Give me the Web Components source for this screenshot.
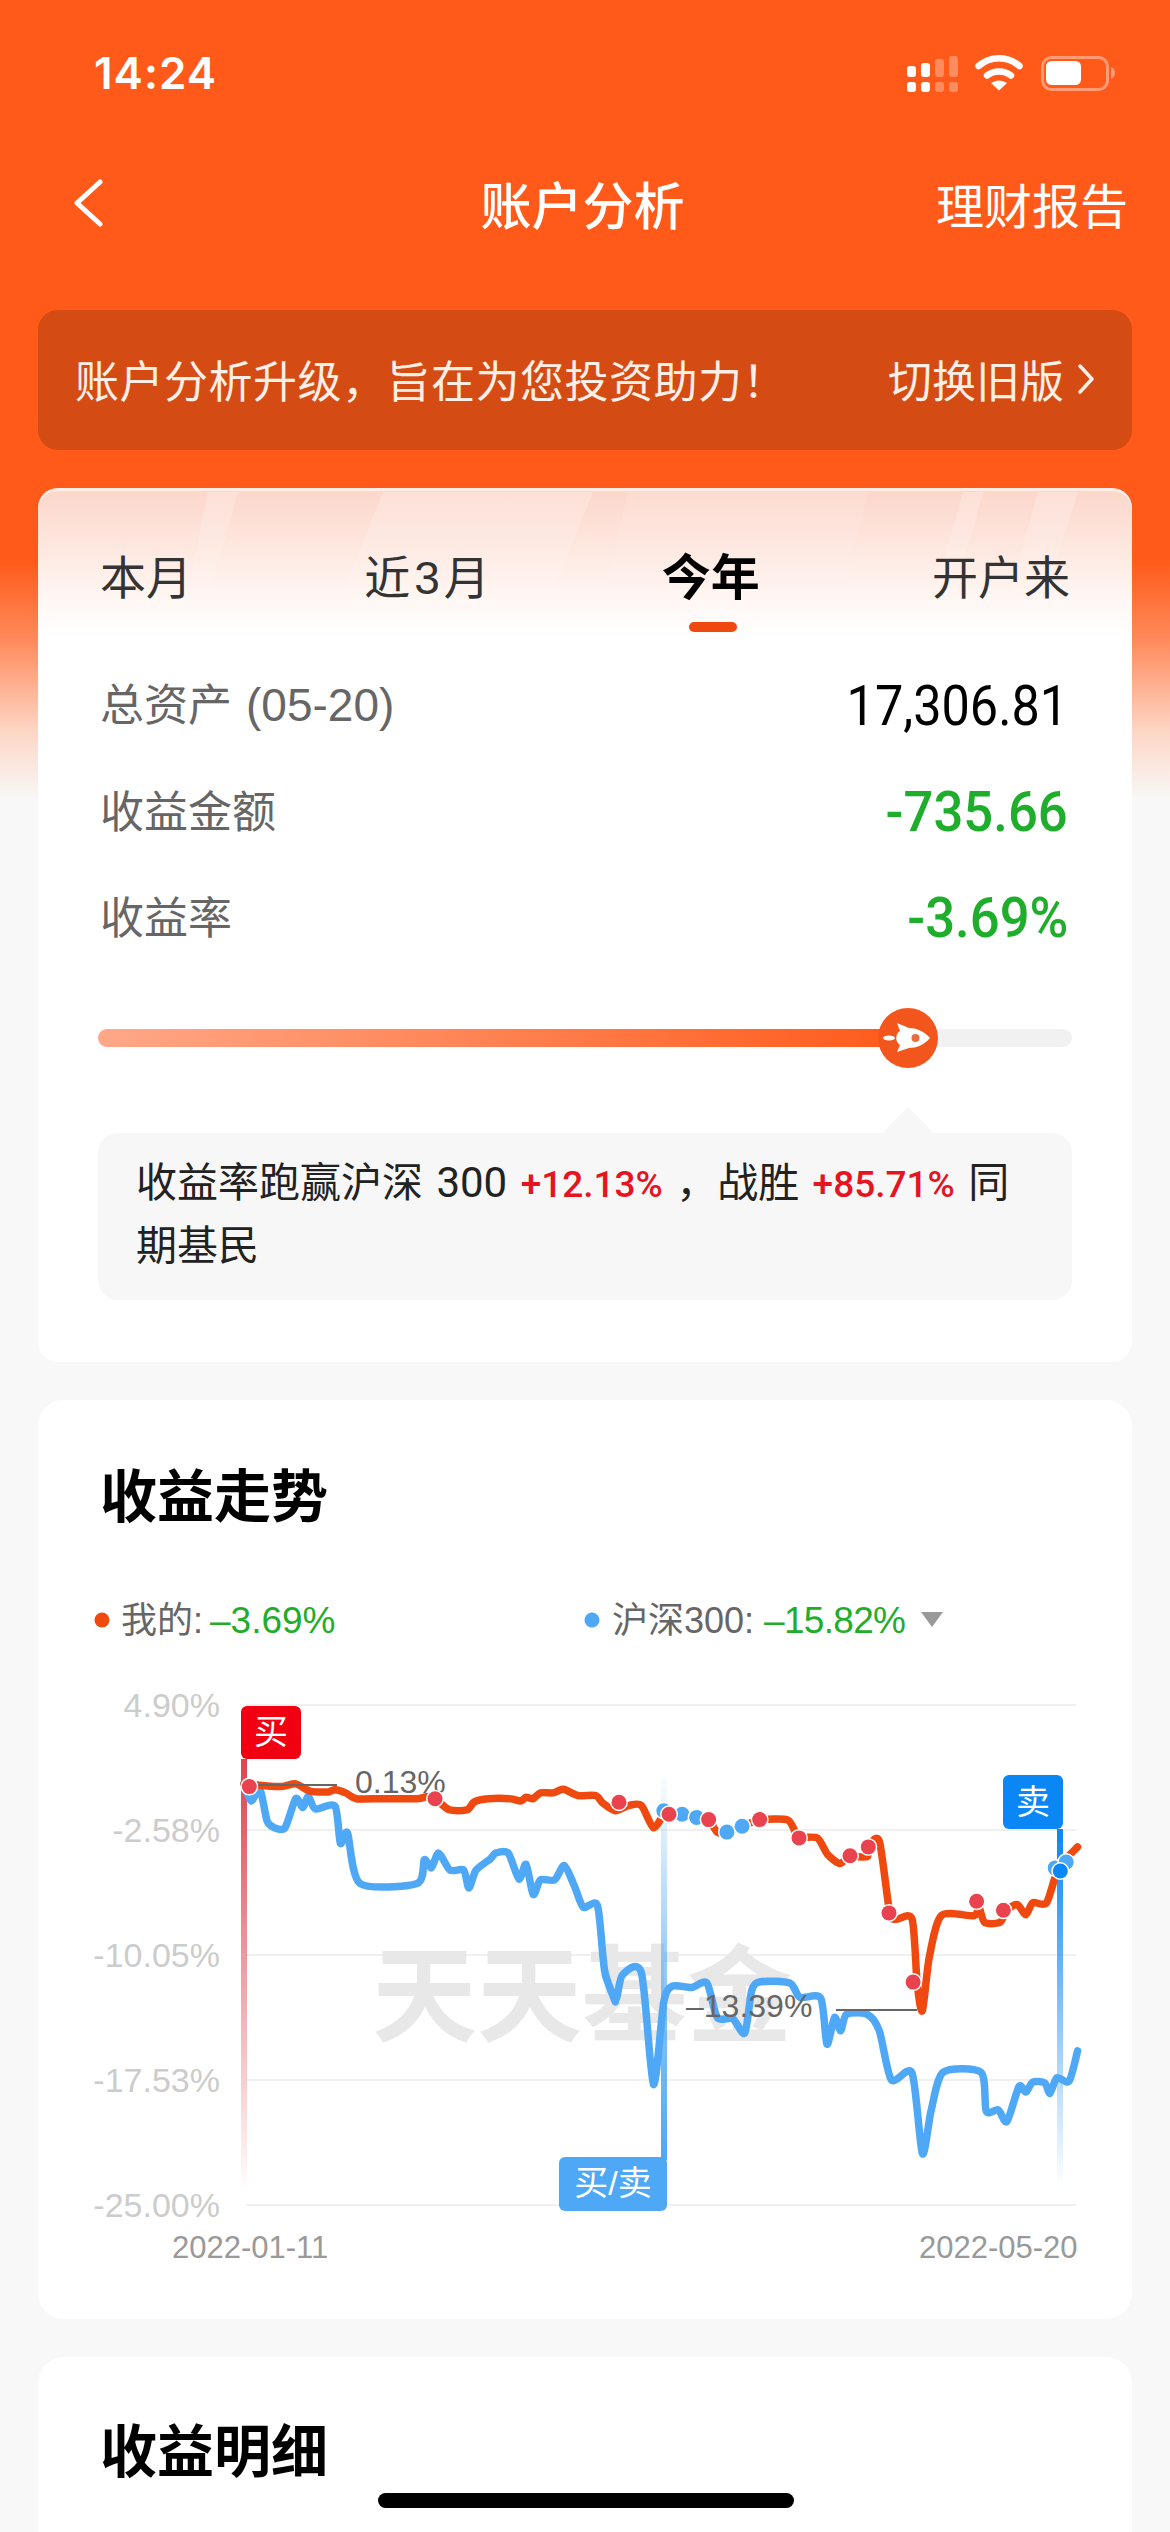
<!DOCTYPE html>
<html lang="zh">
<head>
<meta charset="utf-8">
<title>账户分析</title>
<style>
  html, body { margin: 0; padding: 0; }
  body {
    width: 1170px;
    height: 2532px;
    overflow: hidden;
    font-family: "Liberation Sans", "Noto Sans CJK SC", sans-serif;
  }
</style>
</head>
<body>
<account-page>
  <status-bar time="14:24"></status-bar>
  <nav-bar title="账户分析" action="理财报告"></nav-bar>
  <notice-banner action="切换旧版">账户分析升级，旨在为您投资助力！</notice-banner>
  <summary-card>
    <period-tabs></period-tabs>
    <stat-row label="总资产" extra="(05-20)" value="17,306.81"></stat-row>
    <stat-row label="收益金额" value="-735.66" tone="down"></stat-row>
    <stat-row label="收益率" value="-3.69%" tone="down"></stat-row>
    <rank-slider></rank-slider>
    <compare-note>收益率跑赢沪深 <i>300</i> <b>+12.13%</b> ，战胜 <b>+85.71%</b> 同<br>期基民</compare-note>
  </summary-card>
  <section-card title="收益走势" class="trend"><trend-chart></trend-chart></section-card>
  <section-card title="收益明细" class="detail"></section-card>
  <home-indicator></home-indicator>
</account-page>

<script>
const CJK = '"Noto Sans CJK SC", "Liberation Sans", sans-serif';

class AccountPage extends HTMLElement {
  constructor() {
    super();
    this.attachShadow({ mode: "open" });
    this.shadowRoot.innerHTML = `
    <style>
    :host {
      display: block;
      position: relative;
      width: 1170px;
      height: 2532px;
      overflow: hidden;
      background: linear-gradient(#ff5a19 0, #ff5a19 560px, #ff8a5c 640px, #fdd5c4 730px, #f8f8f8 800px, #f8f8f8 100%);
    }
    </style>
    <slot></slot>
    `;
  }
}

class StatusBar extends HTMLElement {
  constructor() {
    super();
    this.attachShadow({ mode: "open" });
    this.shadowRoot.innerHTML = `
    <style>
    :host { display: flex; height: 146px; align-items: center; justify-content: space-between; padding: 0 55px 0 94px; color: #fff; }
    .time { font: 600 44px Inter, "Liberation Sans", sans-serif; letter-spacing: 1px; }
    svg { display: block; }
    </style>
    <span class="time">${this.getAttribute("time") || ""}</span>
    <svg width="210" height="40" viewBox="905 54 210 40" fill="#fff">
      <rect x="907" y="83" width="9" height="10" rx="3"/><rect x="921" y="83" width="9" height="10" rx="3"/>
      <rect x="907" y="67" width="9" height="11" rx="3"/><rect x="921" y="64" width="9" height="14" rx="3"/>
      <g opacity=".3"><rect x="935" y="83" width="9" height="10" rx="3"/><rect x="949" y="83" width="9" height="10" rx="3"/>
      <rect x="935" y="60" width="9" height="18" rx="3"/><rect x="949" y="57" width="9" height="21" rx="3"/></g>
      <path d="M978.5 67 C990 56.5 1008 56.5 1019.5 67" fill="none" stroke="#fff" stroke-width="6.5" stroke-linecap="round"/>
      <path d="M987 76.500 C993.500 71 1004.500 71 1011 76.500" fill="none" stroke="#fff" stroke-width="6.500" stroke-linecap="round"/>
      <path d="M991 84 C996 80.500 1002 80.500 1007 84 L999 91.500Z"/>
      <rect x="1042.500" y="58.500" width="65" height="32" rx="9" fill="none" stroke="#fff" stroke-opacity=".4" stroke-width="3"/>
      <rect x="1046" y="62" width="35" height="24" rx="5.500"/>
      <path d="M1111 68 C1114 69.500 1115 72 1115 74 C1115 76 1114 78.500 1111 80Z" opacity=".4"/>
    </svg>
    `;
  }
}

class NavBar extends HTMLElement {
  constructor() {
    super();
    this.attachShadow({ mode: "open" });
    this.shadowRoot.innerHTML = `
    <style>
    :host { display: grid; grid-template-columns: 1fr auto 1fr; align-items: center; height: 114px; padding: 0 42px 0 37px; color: #fff; font-family: ${CJK}; }
    svg { display: block; margin-left: 37px; }
    .title { font-size: 51px; font-weight: 500; }
    .action { justify-self: end; font-size: 48px; }
    </style>
    <svg width="30" height="48" viewBox="0 0 30 48" fill="none" stroke="#fff" stroke-width="5" stroke-linecap="round" stroke-linejoin="round">
      <path d="M26 3 L3 24 L26 45"/>
    </svg>
    <span class="title">${this.getAttribute("title")}</span>
    <span class="action">${this.getAttribute("action")}</span>
    `;
  }
}

class NoticeBanner extends HTMLElement {
  constructor() {
    super();
    this.attachShadow({ mode: "open" });
    this.shadowRoot.innerHTML = `
    <style>
    :host {
      display: flex; align-items: center; justify-content: space-between;
      box-sizing: border-box; height: 140px; margin: 50px 38px 0; padding: 0 37px;
      background: #d44c14; border-radius: 20px; color: #fdeee6; font-size: 44px; line-height: 60px; font-family: ${CJK};
    }
    .main { letter-spacing: .5px; margin-top: -3px; }
    .action { display: flex; align-items: center; gap: 13px; margin-top: -3px; }
    svg { display: block; }
    </style>
    <span class="main"><slot></slot></span>
    <span class="action">${this.getAttribute("action")}
      <svg width="18" height="32" viewBox="0 0 18 32" fill="none" stroke="#fdeee6" stroke-width="3.500" stroke-linecap="round" stroke-linejoin="round"><path d="M3 3 L15 16 L3 29"/></svg>
    </span>
    `;
  }
}

class SummaryCard extends HTMLElement {
  constructor() {
    super();
    this.attachShadow({ mode: "open" });
    this.shadowRoot.innerHTML = `
    <style>
    :host {
      display: block; position: relative; overflow: hidden; box-sizing: border-box;
      height: 874px; margin: 38px 38px 0; padding: 0 62px; border-radius: 20px;
      background: linear-gradient(#fcd6c9 0, #fde3da 45px, #feefe9 85px, #fff8f5 115px, #ffffff 150px);
      box-shadow: inset 0 3px 0 rgba(255, 255, 255, .55);
    }
    .streaks { position: absolute; left: 0; top: 0; }
    .body { position: relative; }
    </style>
    <svg class="streaks" width="1094" height="140" viewBox="0 0 1094 140">
      <defs><linearGradient id="fade" x1="0" y1="0" x2="0" y2="1"><stop offset="0" stop-color="#fff" stop-opacity=".24"/><stop offset="1" stop-color="#fff" stop-opacity="0"/></linearGradient></defs>
      <path d="M170 4 L200 4 L165 130 L145 130Z" fill="url(#fade)"/>
      <path d="M345 4 L555 4 L505 130 L295 130Z" fill="url(#fade)"/>
      <path d="M590 4 L830 4 L800 130 L560 130Z" fill="url(#fade)" opacity=".5"/>
      <path d="M925 4 L945 4 L910 130 L890 130Z" fill="url(#fade)"/>
      <path d="M1000 4 L1040 4 L1000 130 L965 130Z" fill="url(#fade)"/>
    </svg>
    <div class="body"><slot></slot></div>
    `;
  }
}

class PeriodTabs extends HTMLElement {
  constructor() {
    super();
    this.attachShadow({ mode: "open" });
    this.shadowRoot.innerHTML = `
    <style>
    :host { display: flex; justify-content: space-between; align-items: flex-start; padding-top: 55px; height: 107px; color: #333; font-size: 46px; font-family: ${CJK}; line-height: 62px; }
    .on { position: relative; color: #000; font-weight: 700; font-size: 49px; }
    .on::after { content: ""; position: absolute; left: 27px; top: 79px; width: 48px; height: 10px; border-radius: 5px; background: #f0490f; }
    .three { font-family: "Liberation Sans", ${CJK}; padding: 0 4px; }
    </style>
    <span>本月</span>
    <span>近<span class="three">3</span>月</span>
    <span class="on">今年</span>
    <span>开户来</span>
    `;
  }
}

class StatRow extends HTMLElement {
  constructor() {
    super();
    this.attachShadow({ mode: "open" });
    const extra = this.getAttribute("extra");
    this.shadowRoot.innerHTML = `
    <style>
    :host { display: flex; justify-content: space-between; align-items: center; height: 106px; color: #666; font-size: 44px; line-height: 60px; font-family: ${CJK}; }
    .extra { font-family: "Liberation Sans", sans-serif; font-size: 46px; margin-left: 14px; }
    .value { display: inline-block; transform: translateY(3px) scaleX(.9); transform-origin: right center; color: #000; font: 56px/60px Roboto, "Liberation Sans", sans-serif; margin-right: 2px; }
    :host([tone="down"]) .value { color: #1fad2c; font-weight: 500; transform: translateY(3px) scaleX(.94); }
    </style>
    <span>${this.getAttribute("label")}${extra ? `<span class="extra">${extra}</span>` : ""}</span>
    <span class="value">${this.getAttribute("value")}</span>
    `;
  }
}

class RankSlider extends HTMLElement {
  constructor() {
    super();
    this.attachShadow({ mode: "open" });
    this.shadowRoot.innerHTML = `
    <style>
    :host { display: block; position: relative; height: 18px; margin: 61px -2px 0; border-radius: 9px; background: #f1f1f1; }
    .fill { width: 810px; height: 100%; border-radius: 9px 0 0 9px; background: linear-gradient(90deg, #ffa888, #ff5a19); }
    svg { position: absolute; left: 780px; top: -21px; }
    </style>
    <div class="fill"></div>
    <svg width="60" height="60" viewBox="-30 -30 60 60">
      <circle r="30" fill="#f2561d"/>
      <path d="M22 0 C16 -7 8 -10 1 -10 L-11 -15 L-8 -7 C-13 -4 -13 4 -8 7 L-11 14 L1 10 C8 10 16 7 22 0Z" fill="#fff"/>
      <circle cx="7.500" r="4" fill="#e96a3c"/>
      <ellipse cx="-19" rx="6" ry="2.500" fill="#fff"/>
    </svg>
    `;
  }
}

class CompareNote extends HTMLElement {
  constructor() {
    super();
    this.attachShadow({ mode: "open" });
    this.shadowRoot.innerHTML = `
    <style>
    :host { display: block; position: relative; box-sizing: border-box; height: 167px; margin: 86px -2px 0; padding: 19px 38px; border-radius: 20px; background: #f7f7f7; color: #222; font: 41px/63px "Liberation Sans", "Noto Sans CJK SC", sans-serif; }
    :host::before { content: ""; position: absolute; left: 784px; top: -26px; border: 26px solid transparent; border-top: 0; border-bottom-color: #f7f7f7; }
    ::slotted(b) { color: #e5141e; font: 500 37px Roboto, sans-serif; margin: 0 2px; }
    ::slotted(i) { font: 42px Roboto, sans-serif; margin-left: 2px; }
    </style>
    <slot></slot>
    `;
  }
}

class SectionCard extends HTMLElement {
  constructor() {
    super();
    this.attachShadow({ mode: "open" });
    this.shadowRoot.innerHTML = `
    <style>
    :host { display: block; box-sizing: border-box; margin: 38px 38px 0; border-radius: 26px; background: #fff; }
    :host(.trend) { height: 919px; }
    :host(.detail) { height: 300px; }
    h2 { margin: 0; padding: 52px 0 0 62px; height: 88px; font: 700 57px/80px ${CJK}; color: #000; }
    :host(.detail) h2 { padding-top: 50px; }
    </style>
    <h2>${this.getAttribute("title")}</h2>
    <slot></slot>
    `;
  }
}

// traced from the reference: crops were 2.8x/2.24x (left part) and 2.9x/2.24x (right part)
const L = (p) => [60 + p[0] / 2.8, 1600 + p[1] / 2.24];
const R = (p) => [600 + p[0] / 2.9, 1600 + p[1] / 2.24];

function smooth(pts) {
  let d = "M" + pts[0][0].toFixed(1) + " " + pts[0][1].toFixed(1);
  for (let i = 0; i < pts.length - 1; i++) {
    const p0 = pts[i - 1] || pts[i], p1 = pts[i], p2 = pts[i + 1], p3 = pts[i + 2] || p2;
    const c1 = [p1[0] + (p2[0] - p0[0]) / 8, p1[1] + (p2[1] - p0[1]) / 8];
    const c2 = [p2[0] - (p3[0] - p1[0]) / 8, p2[1] - (p3[1] - p1[1]) / 8];
    d += " C" + [c1, c2, p2].map((p) => p[0].toFixed(1) + " " + p[1].toFixed(1)).join(" ");
  }
  return d;
}

const MINE = [
  ...[[515,412],[560,415],[620,418],[660,412],[700,428],[750,430],[770,425],[800,432],[830,445],[900,445],[1000,445],[1030,440],[1050,445],[1090,470],[1140,470],[1160,452],[1200,445],[1260,445],[1290,450],[1305,442],[1325,445],[1345,432],[1380,432],[1410,424],[1450,438],[1500,438],[1520,455],[1555,472]].map(L),
  ...[[85,460],[120,460],[155,510],[185,480],[200,480],[240,480],[280,487],[315,492],[340,520],[368,520],[410,507],[465,493],[545,493],[575,530],[630,533],[660,570],[695,590],[725,575],[775,575],[778,553],[810,540],[840,700],[860,715],[905,715],[920,860],[935,920],[955,800],[990,707],[1085,707],[1098,685],[1115,722],[1160,722],[1180,695],[1210,682],[1235,705],[1255,678],[1295,678],[1330,600],[1385,553]].map(R)
];
const INDEX = [
  ...[[515,412],[535,450],[560,425],[580,495],[600,510],[630,510],[660,445],[680,465],[695,440],[715,468],[770,462],[785,545],[805,522],[840,635],[1000,635],[1020,582],[1040,600],[1060,567],[1092,605],[1130,605],[1145,645],[1165,605],[1205,580],[1220,567],[1255,567],[1285,625],[1305,592],[1325,660],[1345,627],[1385,627],[1412,595],[1440,640],[1465,688],[1505,685],[1525,830],[1555,900]].map(L),
  ...[[15,840],[45,895],[65,840],[120,835],[155,1085],[185,900],[210,865],[265,868],[310,858],[340,935],[385,938],[420,970],[440,875],[465,855],[550,858],[580,890],[640,892],[658,995],[680,935],[698,965],[715,928],[775,928],[810,965],[845,1075],[905,1060],[935,1240],[960,1145],[995,1058],[1105,1058],[1120,1145],[1155,1142],[1180,1168],[1215,1090],[1235,1102],[1255,1080],[1290,1082],[1305,1105],[1325,1070],[1360,1078],[1385,1010]].map(R)
];
const RED_DOTS = [L([530,418]), L([1050,445]), ...[[55,453],[200,480],[315,492],[463,492],[577,533],[725,573],[778,553],[838,701],[908,856],[1092,675],[1170,695]].map(R)];
const BLUE_DOTS = [[185,472],[238,480],[280,487],[368,520],[412,507],[1320,600],[1352,587]].map(R);
const GRID = [[1705, "4.90%"], [1830, "-2.58%"], [1955, "-10.05%"], [2080, "-17.53%"], [2205, "-25.00%"]];

class TrendChart extends HTMLElement {
  constructor() {
    super();
    this.attachShadow({ mode: "open" });
    const dot = (p, c) => `<circle cx="${p[0].toFixed(1)}" cy="${p[1].toFixed(1)}" r="7.500" fill="${c}" stroke="#fff" stroke-width="3" paint-order="stroke"/>`;
    this.shadowRoot.innerHTML = `
    <style>
    :host { display: block; }
    svg { display: block; font-family: "Liberation Sans", "Noto Sans CJK SC", sans-serif; }
    .tick { font-size: 34px; fill: #ccc; text-anchor: end; }
    .date { font-size: 31px; fill: #999; }
    .lab { font-size: 36px; fill: #666; }
    .note { font-size: 32px; fill: #666; }
    .down { font-size: 37px; fill: #1fad2c; }
    .flag { font-size: 34px; fill: #fff; text-anchor: middle; }
    .wm { font: 700 105px "Noto Sans CJK SC", sans-serif; fill: #e8e8e8; }
    </style>
    <svg width="1094" height="778" viewBox="38 1540 1094 778">
      <defs>
        <linearGradient id="gr" x1="0" y1="0" x2="0" y2="1"><stop offset="0" stop-color="#e0434f"/><stop offset="1" stop-color="#e0434f" stop-opacity="0"/></linearGradient>
        <linearGradient id="gb" x1="0" y1="0" x2="0" y2="1"><stop offset="0" stop-color="#0a86f5"/><stop offset="1" stop-color="#0a86f5" stop-opacity="0"/></linearGradient>
        <linearGradient id="gm" x1="0" y1="0" x2="0" y2="1"><stop offset="0" stop-color="#4ea8f5" stop-opacity="0"/><stop offset=".5" stop-color="#4ea8f5" stop-opacity=".6"/><stop offset="1" stop-color="#4ea8f5"/></linearGradient>
      </defs>

      <circle cx="102" cy="1620" r="7.500" fill="#f0490f"/>
      <text class="lab" x="121" y="1633">我的:</text>
      <text class="down" x="210" y="1633">–3.69%</text>
      <circle cx="592" cy="1620" r="7.500" fill="#4ea8f5"/>
      <text class="lab" x="612" y="1633">沪深300:</text>
      <text class="down" x="764" y="1633" textLength="142">–15.82%</text>
      <path d="M921 1612 H943 L932 1627Z" fill="#999"/>

      ${GRID.map(([y, t]) => `<line x1="246" x2="1076" y1="${y}" y2="${y}" stroke="#f0f0f0" stroke-width="2"/><text class="tick" x="220" y="${y + 12}">${t}</text>`).join("")}
      <text class="date" x="172" y="2258">2022-01-11</text>
      <text class="date" x="919" y="2258">2022-05-20</text>

      <text class="wm" x="372" y="2033">天天基金</text>

      <rect x="241" y="1759" width="6" height="434" fill="url(#gr)"/>
      <rect x="661" y="1768" width="6" height="392" fill="url(#gm)"/>
      <rect x="1057" y="1829" width="6" height="358" fill="url(#gb)"/>

      <path d="${smooth(INDEX)}" fill="none" stroke="#4ea8f5" stroke-width="7.500" stroke-linejoin="round" stroke-linecap="round"/>
      <path d="${smooth(MINE)}" fill="none" stroke="#f0490f" stroke-width="7.500" stroke-linejoin="round" stroke-linecap="round"/>

      <line x1="256" x2="337" y1="1785" y2="1785" stroke="#666" stroke-width="2"/>
      <text class="note" x="355" y="1793">0.13%</text>
      <line x1="836" x2="917" y1="2010" y2="2010" stroke="#666" stroke-width="2"/>
      <text class="note" x="686" y="2017">–13.39%</text>

      ${BLUE_DOTS.map((p) => dot(p, "#4ea8f5")).join("")}
      ${dot(R([1335, 607]), "#0a86f5")}
      ${RED_DOTS.map((p) => dot(p, "#ea4350")).join("")}

      <rect x="241" y="1706" width="60" height="53" rx="6" fill="#f00010"/>
      <text class="flag" x="271" y="1744">买</text>
      <rect x="559" y="2157" width="108" height="54" rx="6" fill="#4ea8f5"/>
      <text class="flag" x="613" y="2195">买/卖</text>
      <rect x="1003" y="1775" width="60" height="54" rx="6" fill="#0a86f5"/>
      <text class="flag" x="1033" y="1814">卖</text>
    </svg>
    `;
  }
}

class HomeIndicator extends HTMLElement {
  constructor() {
    super();
    this.attachShadow({ mode: "open" });
    this.shadowRoot.innerHTML = `
    <style>
    :host { position: absolute; left: 378px; top: 2493px; width: 416px; height: 15px; border-radius: 8px; background: #000; }
    </style>
    `;
  }
}

customElements.define("account-page", AccountPage);
customElements.define("status-bar", StatusBar);
customElements.define("nav-bar", NavBar);
customElements.define("notice-banner", NoticeBanner);
customElements.define("summary-card", SummaryCard);
customElements.define("period-tabs", PeriodTabs);
customElements.define("stat-row", StatRow);
customElements.define("rank-slider", RankSlider);
customElements.define("compare-note", CompareNote);
customElements.define("section-card", SectionCard);
customElements.define("trend-chart", TrendChart);
customElements.define("home-indicator", HomeIndicator);
</script>
</body>
</html>
